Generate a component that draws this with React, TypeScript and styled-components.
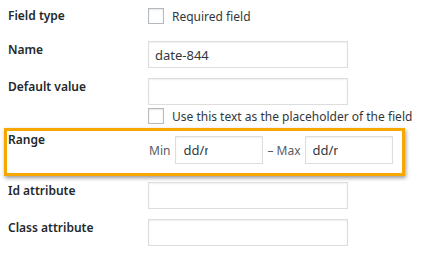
import styled, { createGlobalStyle } from "styled-components";

const GlobalStyle = createGlobalStyle`
  body {
    margin: 0;
    background: #fff;
    font-family: "Noto Sans", "Open Sans", sans-serif;
    font-size: 12px;
    color: #32373c;
  }
`;

const Form = styled.div`
  display: flex;
  flex-direction: column;
  width: 428px;
`;

const Row = styled.div<{ $top: number; $center?: boolean }>`
  display: grid;
  grid-template-columns: 140px 1fr;
  align-items: ${(p) => (p.$center ? "center" : "start")};
  margin-top: ${(p) => p.$top}px;
  padding-left: 8px;
`;

const HighlightRow = styled.div`
  display: grid;
  grid-template-columns: 141px 1fr;
  align-items: start;
  margin: 4px 0 0 4px;
  width: 401px;
  box-sizing: border-box;
  border: 3px solid #f6a800;
  padding: 0 0 9px 1px;
  box-shadow: 1px 2px 4px rgba(0, 0, 0, 0.4);
`;

const Label = styled.div`
  font-size: 12px;
  font-weight: 600;
  line-height: 18px;
  color: #23282d;
  white-space: nowrap;
`;

const TextInput = styled.div`
  box-sizing: border-box;
  width: 200px;
  height: 27px;
  border: 1px solid #ddd;
  box-shadow: inset 0 1px 2px rgba(0, 0, 0, 0.07);
  padding: 0 6px;
  display: flex;
  align-items: center;
  font-size: 13px;
  color: #32373c;
`;

const Check = styled.span`
  box-sizing: border-box;
  width: 16px;
  height: 16px;
  border: 1px solid #b4b9be;
  box-shadow: inset 0 1px 2px rgba(0, 0, 0, 0.1);
  background: #fff;
  flex-shrink: 0;
`;

const CheckLine = styled.label`
  display: flex;
  align-items: center;
  gap: 8px;
  height: 16px;
  font-size: 12px;
  color: #32373c;
  white-space: nowrap;
`;

const RangeFields = styled.div`
  display: flex;
  align-items: center;
  padding-top: 5px;
  font-size: 12px;
  color: #555d66;
`;

const RangeText = styled.span<{ $gap: number }>`
  margin-right: ${(p) => p.$gap}px;
  white-space: nowrap;
`;

const DateBox = styled.div<{ $gapAfter?: number }>`
  box-sizing: border-box;
  width: 88px;
  height: 28px;
  border: 1px solid #ddd;
  box-shadow: inset 0 1px 2px rgba(0, 0, 0, 0.07);
  padding-left: 7px;
  margin-right: ${(p) => p.$gapAfter ?? 0}px;
  display: flex;
  align-items: center;
  font-size: 13px;
  color: #32373c;
`;

const DateClip = styled.span`
  display: block;
  width: 25px;
  overflow: hidden;
  white-space: nowrap;
`;

export default function App() {
  return (
    <>
      <GlobalStyle />
      <Form>
        <Row $top={7} $center>
          <Label>Field type</Label>
          <CheckLine>
            <Check />
            Required field
          </CheckLine>
        </Row>
        <Row $top={16}>
          <Label>Name</Label>
          <TextInput>date-844</TextInput>
        </Row>
        <Row $top={10}>
          <Label>Default value</Label>
          <TextInput />
        </Row>
        <Row $top={3}>
          <span />
          <CheckLine>
            <Check />
            Use this text as the placeholder of the field
          </CheckLine>
        </Row>
        <HighlightRow>
          <Label>Range</Label>
          <RangeFields>
            <RangeText $gap={5}>Min</RangeText>
            <DateBox $gapAfter={4}>
              <DateClip>dd/mm/yyyy</DateClip>
            </DateBox>
            <RangeText $gap={4}>– Max</RangeText>
            <DateBox>
              <DateClip>dd/mm/yyyy</DateClip>
            </DateBox>
          </RangeFields>
        </HighlightRow>
        <Row $top={6}>
          <Label>Id attribute</Label>
          <TextInput />
        </Row>
        <Row $top={10}>
          <Label>Class attribute</Label>
          <TextInput />
        </Row>
      </Form>
    </>
  );
}
